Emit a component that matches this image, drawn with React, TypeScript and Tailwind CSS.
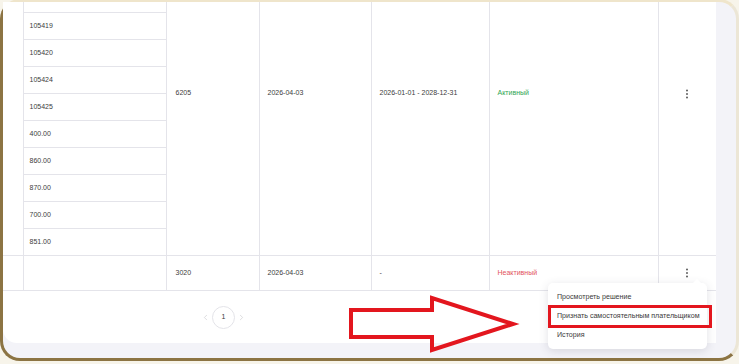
import { ChevronLeft, ChevronRight } from "lucide-react";

const subRows = [
  "",
  "",
  "105418",
  "105419",
  "105420",
  "105424",
  "105425",
  "400.00",
  "860.00",
  "870.00",
  "700.00",
  "851.00",
];

function Kebab() {
  return (
    <svg width="4" height="10" viewBox="0 0 4 10" className="mx-auto">
      <circle cx="2" cy="1.5" r="0.95" fill="#555" />
      <circle cx="2" cy="5" r="0.95" fill="#555" />
      <circle cx="2" cy="8.5" r="0.95" fill="#555" />
    </svg>
  );
}

const cell = "border border-[#e4e4ea] align-middle text-left";

export default function App() {
  return (
    <div
      className="relative w-[739px] h-[364px] overflow-hidden bg-[#f7f4ea] text-[7px] text-[#3c3c3c]"
      style={{ fontFamily: '"Liberation Sans", Arial, sans-serif' }}
    >
      {/* gold frame */}
      <div className="-mt-px h-[362px] w-[739px] rounded-[20px] border-[3px] border-[#8c7443] border-t-[#efe5cb] border-r-[#ece6d6] bg-[#f3f3f8] flex flex-col pb-[15px] pr-[20px]">
        <div className="flex-1 bg-white rounded-bl-[14px] overflow-hidden flex flex-col">
          <table className="table-fixed border-collapse w-[713px] -mt-[71px]">
            <colgroup>
              <col className="w-[20px]" />
              <col className="w-[143px]" />
              <col className="w-[93px]" />
              <col className="w-[112px]" />
              <col className="w-[118px]" />
              <col className="w-[169px]" />
              <col className="w-[58px]" />
            </colgroup>
            <tbody>
              {subRows.map((v, i) => (
                <tr key={i} className="h-[27px]">
                  {i === 0 && <td rowSpan={12} className={cell + " border-l-0"} />}
                  <td className={cell + " pl-[6px]"}>{v}</td>
                  {i === 0 && (
                    <>
                      <td rowSpan={12} className={cell + " pl-[9px]"}>6205</td>
                      <td rowSpan={12} className={cell + " pl-[8px]"}>2026-04-03</td>
                      <td rowSpan={12} className={cell + " pl-[8px]"}>2026-01-01 - 2028-12-31</td>
                      <td rowSpan={12} className={cell + " pl-[8px] text-[#2fa552]"}>Активный</td>
                      <td rowSpan={12} className={cell}>
                        <Kebab />
                      </td>
                    </>
                  )}
                </tr>
              ))}
              <tr className="h-[35px]">
                <td className={cell + " border-l-0"} />
                <td className={cell} />
                <td className={cell + " pl-[9px]"}>3020</td>
                <td className={cell + " pl-[8px]"}>2026-04-03</td>
                <td className={cell + " pl-[8px]"}>-</td>
                <td className={cell + " pl-[8px] text-[#e2535d]"}>Неактивный</td>
                <td className={cell}>
                  <Kebab />
                </td>
              </tr>
            </tbody>
          </table>

          <div className="flex-1 flex items-center pl-[198px] gap-[2px] text-[#c4c4c8]">
            <ChevronLeft size={9} strokeWidth={1.5} />
            <div className="w-[23px] h-[23px] rounded-full border border-[#e3e3e8] flex items-center justify-center text-[#3a3a3a]">
              1
            </div>
            <ChevronRight size={9} strokeWidth={1.5} />
          </div>
        </div>
      </div>

      {/* red annotation arrow */}
      <svg
        className="absolute left-0 top-0 pointer-events-none"
        width="739"
        height="364"
        viewBox="0 0 739 364"
      >
        <polygon
          points="351,310 432,310 432,298 513,324 432,350 432,337 351,337"
          fill="none"
          stroke="#e3161e"
          strokeWidth="4"
          strokeLinejoin="miter"
        />
      </svg>

      {/* dropdown menu */}
      <div className="absolute left-[692px] top-[279px] w-0 h-0 border-x-[5px] border-x-transparent border-b-[5px] border-b-white z-10" />
      <div className="absolute left-[548px] top-[283px] w-[159px] h-[66px] bg-white rounded-[5px] shadow-[0_2px_10px_rgba(60,60,90,0.16)] flex flex-col justify-center gap-[9px] pl-[9px] text-[7.1px] leading-[10px] text-[#3a3a3a] whitespace-nowrap">
        <div>Просмотреть решение</div>
        <div>Признать самостоятельным плательщиком</div>
        <div>История</div>
      </div>
      <div className="absolute left-[548px] top-[305px] w-[164px] h-[23px] border-[3px] border-[#e3161e]" />
    </div>
  );
}
